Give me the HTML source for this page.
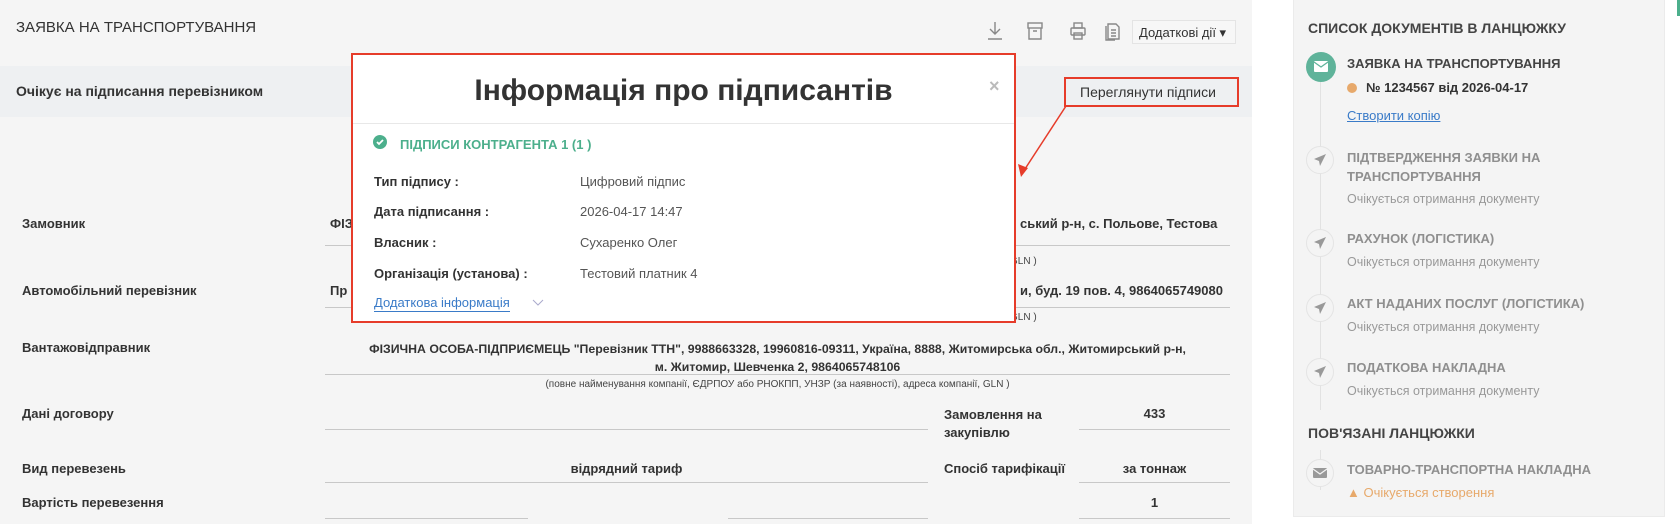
<!DOCTYPE html>
<html><head><meta charset="utf-8"><style>
*{margin:0;padding:0;box-sizing:border-box}
body{width:1680px;height:524px;background:#fff;font-family:"Liberation Sans",sans-serif;position:relative;overflow:hidden;color:#333}
.a{position:absolute;white-space:nowrap}
.b{font-weight:bold}
.ln{position:absolute;height:1px;background:#c8c8c8}
.hint{font-size:10px;color:#444}
.lbl{font-size:13px;font-weight:bold;color:#333}
.gray{color:#8a8a8a}
.t{font-weight:bold;color:#8f8f8f}
.circ{position:absolute;border-radius:50%;background:#f4f4f4;border:1px solid #e4e4e4}
</style></head><body>
<div class="a" style="left:0;top:0;width:1252px;height:524px;background:#f5f5f5"></div>
<div class="a" style="left:16px;top:19px;font-size:15px;color:#333">ЗАЯВКА НА ТРАНСПОРТУВАННЯ</div>
<svg class="a" style="left:985px;top:20px" width="20" height="22" viewBox="0 0 20 22" fill="none" stroke="#888" stroke-width="1.4"><path d="M10 2v12M5 9l5 5 5-5M3 19h14"/></svg>
<svg class="a" style="left:1025px;top:20px" width="20" height="22" viewBox="0 0 20 22" fill="none" stroke="#888" stroke-width="1.4"><rect x="3" y="3" width="14" height="5"/><path d="M4 8v11h12V8M8 11h4"/></svg>
<svg class="a" style="left:1068px;top:20px" width="20" height="22" viewBox="0 0 20 22" fill="none" stroke="#888" stroke-width="1.4"><rect x="6" y="3" width="8" height="5"/><rect x="3" y="8" width="14" height="7" rx="1"/><rect x="6" y="13" width="8" height="6"/></svg>
<svg class="a" style="left:1103px;top:20px" width="20" height="22" viewBox="0 0 20 22" fill="none" stroke="#888" stroke-width="1.4"><path d="M5 4h8l3 3v12H5zM8 10h5M8 13h5M8 16h5M3 6v14h9"/></svg>
<div class="a" style="left:1132px;top:20px;width:104px;height:24px;border:1px solid #e4e4e4;background:#f7f7f7;font-size:13px;padding:4px 0 0 6px;color:#333">Додаткові дії ▾</div>
<div class="a" style="left:0;top:66px;width:1252px;height:51px;background:#eef0f2"></div>
<div class="a lbl" style="left:16px;top:83px;font-size:14px">Очікує на підписання перевізником</div>
<div class="a" style="left:1064px;top:77px;width:175px;height:30px;border:2px solid #e63c2a;font-size:14px;padding:5px 0 0 14px;color:#333">Переглянути підписи</div>
<svg class="a" style="left:0;top:0" width="1252" height="524"><path d="M1066 106 L1023 172" stroke="#e63c2a" stroke-width="1.5"/><path d="M1021 177 L1018 164 L1028 168Z" fill="#e63c2a"/></svg>

<div class="a lbl" style="left:22px;top:216px">Замовник</div>
<div class="a lbl" style="left:330px;top:216px">ФІЗ</div>
<div class="a lbl" style="left:1020px;top:216px">ський р-н, с. Польове, Тестова</div>
<div class="ln" style="left:325px;top:245px;width:905px"></div>
<div class="a hint" style="left:1010px;top:256px">GLN )</div>
<div class="a lbl" style="left:22px;top:283px">Автомобільний перевізник</div>
<div class="a lbl" style="left:330px;top:283px">Пр</div>
<div class="a lbl" style="left:1020px;top:283px">и, буд. 19 пов. 4, 9864065749080</div>
<div class="ln" style="left:325px;top:307px;width:905px"></div>
<div class="a hint" style="left:1010px;top:312px">GLN )</div>
<div class="a lbl" style="left:22px;top:340px">Вантажовідправник</div>
<div class="a lbl" style="left:325px;top:340px;width:905px;text-align:center;white-space:normal;font-size:12.3px;line-height:18px">ФІЗИЧНА ОСОБА-ПІДПРИЄМЕЦЬ "Перевізник ТТН", 9988663328, 19960816-09311, Україна, 8888, Житомирська обл., Житомирський р-н,<br>м. Житомир, Шевченка 2, 9864065748106</div>
<div class="ln" style="left:325px;top:374px;width:905px"></div>
<div class="a hint" style="left:325px;top:379px;width:905px;text-align:center">(повне найменування компанії, ЄДРПОУ або РНОКПП, УНЗР (за наявності), адреса компанії, GLN )</div>
<div class="a lbl" style="left:22px;top:406px">Дані договору</div>
<div class="ln" style="left:325px;top:429px;width:603px"></div>
<div class="a lbl" style="left:944px;top:406px;line-height:18px">Замовлення на<br>закупівлю</div>
<div class="a lbl" style="left:1079px;top:406px;width:151px;text-align:center">433</div>
<div class="ln" style="left:1079px;top:429px;width:151px"></div>
<div class="a lbl" style="left:22px;top:461px">Вид перевезень</div>
<div class="a lbl" style="left:325px;top:461px;width:603px;text-align:center">відрядний тариф</div>
<div class="ln" style="left:325px;top:482px;width:603px"></div>
<div class="a lbl" style="left:944px;top:461px">Спосіб тарифікації</div>
<div class="a lbl" style="left:1079px;top:461px;width:151px;text-align:center">за тоннаж</div>
<div class="ln" style="left:1079px;top:482px;width:151px"></div>
<div class="a lbl" style="left:22px;top:495px">Вартість перевезення</div>
<div class="a lbl" style="left:1079px;top:495px;width:151px;text-align:center">1</div>
<div class="ln" style="left:325px;top:518px;width:203px"></div>
<div class="ln" style="left:728px;top:518px;width:200px"></div>
<div class="ln" style="left:1079px;top:518px;width:151px"></div>

<div class="a" style="left:351px;top:53px;width:665px;height:270px;background:#fff;border:2px solid #e63c2a"></div>
<div class="a" style="left:353px;top:74px;width:661px;text-align:center;font-size:30px;font-weight:bold;color:#333">Інформація про підписантів</div>
<div class="a" style="left:989px;top:76px;font-size:18px;color:#bbb;font-weight:bold">×</div>
<div class="ln" style="left:353px;top:123px;width:661px;background:#e8e8e8"></div>
<svg class="a" style="left:373px;top:135px" width="14" height="14" viewBox="0 0 14 14"><circle cx="7" cy="7" r="7" fill="#4caf8c"/><path d="M4 7l2 2 4-4" stroke="#fff" stroke-width="1.8" fill="none"/></svg>
<div class="a b" style="left:400px;top:137px;font-size:13px;color:#4caf8c">ПІДПИСИ КОНТРАГЕНТА 1 (1 )</div>
<div class="a lbl" style="left:374px;top:174px">Тип підпису :</div>
<div class="a" style="left:580px;top:174px;font-size:13px;color:#555">Цифровий підпис</div>
<div class="a lbl" style="left:374px;top:204px">Дата підписання :</div>
<div class="a" style="left:580px;top:204px;font-size:13px;color:#555">2026-04-17 14:47</div>
<div class="a lbl" style="left:374px;top:235px">Власник :</div>
<div class="a" style="left:580px;top:235px;font-size:13px;color:#555">Сухаренко Олег</div>
<div class="a lbl" style="left:374px;top:266px">Організація (установа) :</div>
<div class="a" style="left:580px;top:266px;font-size:13px;color:#555">Тестовий платник 4</div>
<div class="a" style="left:374px;top:295px;font-size:13px;color:#3a7bc8;border-bottom:1px solid #3a7bc8;padding-bottom:1px">Додаткова інформація</div>
<svg class="a" style="left:532px;top:299px" width="12" height="8" viewBox="0 0 12 8"><path d="M1 1l5 5 5-5" stroke="#aac" fill="none"/></svg>

<div class="a" style="left:1293px;top:0;width:372px;height:517px;background:#f4f4f4;border:1px solid #ebebeb;border-top:none"></div>
<div class="a" style="left:1677px;top:0;width:3px;height:16px;background:#4caf8c"></div>
<div class="a" style="left:1320px;top:60px;width:1px;height:430px;background:#e2e2e2"></div>
<div class="a b" style="left:1308px;top:20px;font-size:14px;color:#444">СПИСОК ДОКУМЕНТІВ В ЛАНЦЮЖКУ</div>
<div class="a" style="left:1306px;top:52px;width:30px;height:30px;border-radius:50%;background:#5fb39a"></div>
<svg class="a" style="left:1314px;top:61px" width="14" height="11" viewBox="0 0 14 11"><rect width="14" height="11" rx="1" fill="#fff"/><path d="M0 1l7 5 7-5" stroke="#5fb39a" stroke-width="1.3" fill="none"/></svg>
<div class="a b" style="left:1347px;top:56px;font-size:13px;color:#444">ЗАЯВКА НА ТРАНСПОРТУВАННЯ</div>
<div class="a" style="left:1347px;top:83px;width:10px;height:10px;border-radius:50%;background:#e7a96b"></div>
<div class="a b" style="left:1366px;top:80px;font-size:13px;color:#333">№ 1234567 від 2026-04-17</div>
<div class="a" style="left:1347px;top:108px;font-size:13px;color:#3a7bc8;text-decoration:underline">Створити копію</div>
<div class="circ" style="left:1306px;width:28px;height:28px;top:146px"></div>
<div class="a t" style="left:1347px;top:148px;font-size:13px;line-height:19px">ПІДТВЕРДЖЕННЯ ЗАЯВКИ НА<br>ТРАНСПОРТУВАННЯ</div>
<div class="a gray" style="left:1347px;top:192px;font-size:12.5px;color:#999">Очікується отримання документу</div>
<div class="circ" style="left:1306px;width:28px;height:28px;top:229px"></div>
<div class="a t" style="left:1347px;top:231px;font-size:13px">РАХУНОК (ЛОГІСТИКА)</div>
<div class="a gray" style="left:1347px;top:255px;font-size:12.5px;color:#999">Очікується отримання документу</div>
<div class="circ" style="left:1306px;width:28px;height:28px;top:294px"></div>
<div class="a t" style="left:1347px;top:296px;font-size:13px">АКТ НАДАНИХ ПОСЛУГ (ЛОГІСТИКА)</div>
<div class="a gray" style="left:1347px;top:320px;font-size:12.5px;color:#999">Очікується отримання документу</div>
<div class="circ" style="left:1306px;width:28px;height:28px;top:358px"></div>
<div class="a t" style="left:1347px;top:360px;font-size:13px">ПОДАТКОВА НАКЛАДНА</div>
<div class="a gray" style="left:1347px;top:384px;font-size:12.5px;color:#999">Очікується отримання документу</div>
<svg class="a" style="left:1313px;top:153px" width="14" height="14" viewBox="0 0 14 14"><path d="M13 1L1 6l5 2 1 5z" fill="#999"/></svg>
<svg class="a" style="left:1313px;top:236px" width="14" height="14" viewBox="0 0 14 14"><path d="M13 1L1 6l5 2 1 5z" fill="#999"/></svg>
<svg class="a" style="left:1313px;top:301px" width="14" height="14" viewBox="0 0 14 14"><path d="M13 1L1 6l5 2 1 5z" fill="#999"/></svg>
<svg class="a" style="left:1313px;top:365px" width="14" height="14" viewBox="0 0 14 14"><path d="M13 1L1 6l5 2 1 5z" fill="#999"/></svg>
<div class="a" style="left:1300px;top:410px;width:40px;height:40px;background:#f4f4f4"></div>
<div class="a b" style="left:1308px;top:425px;font-size:14px;color:#444">ПОВ'ЯЗАНІ ЛАНЦЮЖКИ</div>
<div class="circ" style="left:1306px;width:28px;height:28px;top:459px"></div>
<svg class="a" style="left:1313px;top:468px" width="14" height="10" viewBox="0 0 14 10"><rect width="14" height="10" rx="1" fill="#999"/><path d="M0 1l7 5 7-5" stroke="#f4f4f4" stroke-width="1.2" fill="none"/></svg>
<div class="a t" style="left:1347px;top:462px;font-size:13px">ТОВАРНО-ТРАНСПОРТНА НАКЛАДНА</div>
<div class="a" style="left:1347px;top:485px;font-size:13px;color:#e7a96b">▲ Очікується створення</div>
</body></html>
